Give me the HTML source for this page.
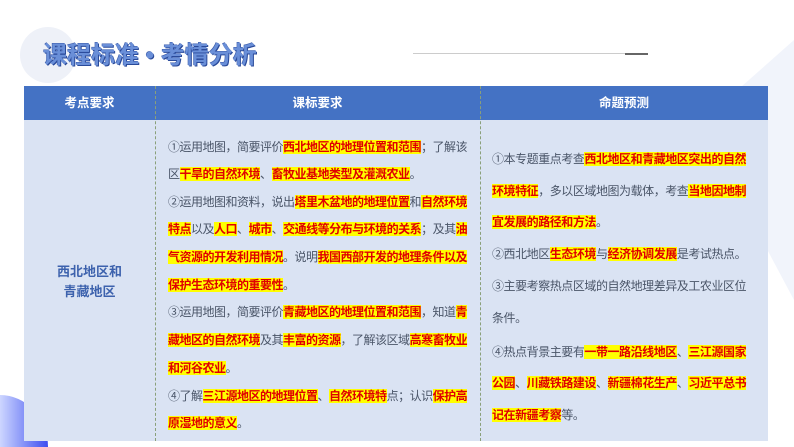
<!DOCTYPE html>
<html style="width:794px;height:447px;overflow:hidden"><head><meta charset="utf-8"><style>
*{margin:0;padding:0;box-sizing:border-box}
body{width:794px;height:447px;overflow:hidden;background:#fff;position:relative;font-family:"Liberation Sans","Noto Sans CJK SC",sans-serif}
.abs{position:absolute}
.t{position:absolute;white-space:nowrap;font-size:12px;color:#4a5568;line-height:16px;letter-spacing:-0.5px}
.r{letter-spacing:-0.45px}
.h{background:#ffff00;color:#e00000;font-weight:bold}
.hd{position:absolute;top:86px;height:34px;line-height:34px;color:#fff;font-weight:bold;font-size:12.5px;text-align:center}
</style></head><body>
<div class="abs" style="left:20px;top:27px;width:56px;height:56px;border-radius:50%;background:#eef1f8"></div>
<div class="abs" style="left:700px;top:40px;width:94px;height:260px;background:#f1f4fb;clip-path:polygon(100% 0,100% 100%,0 32%)"></div>
<div class="abs" style="left:0;top:395px;width:48px;height:52px;border-top-right-radius:48px 52px;background:linear-gradient(90deg,#cdd6ff,#3d4ef0)"></div>
<div class="abs" style="left:43px;top:41px;font-size:24px;font-weight:bold;color:#6a8fd8;text-shadow:1px 1px 0 #2a4a9a,-0.5px -0.5px 0 #3a5aa8;line-height:30px">课程标准 • 考情分析</div>
<div class="abs" style="left:413px;top:53px;width:212px;height:1px;background:#ccc"></div>
<div class="abs" style="left:625px;top:53px;width:23px;height:2px;background:#666"></div>
<div class="abs" style="left:24px;top:86px;width:744px;height:34px;background:#4472c4"></div>
<div class="abs" style="left:24px;top:120px;width:744px;height:321px;background:#dae3f3"></div>
<div class="abs" style="left:155px;top:86px;width:1px;height:355px;border-left:1px dashed #8aa07a"></div>
<div class="abs" style="left:480px;top:86px;width:1px;height:355px;border-left:1px dashed #8aa07a"></div>
<div class="hd" style="left:24px;width:131px">考点要求</div>
<div class="hd" style="left:155px;width:325px">课标要求</div>
<div class="hd" style="left:480px;width:288px">命题预测</div>
<div class="abs" style="left:24px;top:262px;width:131px;text-align:center;color:#3d62ad;font-size:13px;line-height:20px;font-weight:bold">西北地区和<br>青藏地区</div>

<div class="t" style="left:168px;top:139px">①运用地图，简要评价<span class="h">西北地区的地理位置和范围</span>；了解该</div>
<div class="t" style="left:168px;top:166px">区<span class="h">干旱的自然环境</span>、<span class="h">畜牧业基地类型及灌溉农业</span>。</div>
<div class="t" style="left:168px;top:194px">②运用地图和资料，说出<span class="h">塔里木盆地的地理位置</span>和<span class="h">自然环境</span></div>
<div class="t" style="left:168px;top:221px"><span class="h">特点</span>以及<span class="h">人口</span>、<span class="h">城市</span>、<span class="h">交通线等分布与环境的关系</span>；及其<span class="h">油</span></div>
<div class="t" style="left:168px;top:249px"><span class="h">气资源的开发利用情况</span>。说明<span class="h">我国西部开发的地理条件以及</span></div>
<div class="t" style="left:168px;top:277px"><span class="h">保护生态环境的重要性</span>。</div>
<div class="t" style="left:168px;top:304px">③运用地图，简要评价<span class="h">青藏地区的地理位置和范围</span>，知道<span class="h">青</span></div>
<div class="t" style="left:168px;top:332px"><span class="h">藏地区的自然环境</span>及其<span class="h">丰富的资源</span>，了解该区域<span class="h">高寒畜牧业</span></div>
<div class="t" style="left:168px;top:360px"><span class="h">和河谷农业</span>。</div>
<div class="t" style="left:168px;top:388px">④了解<span class="h">三江源地区的地理位置</span>、<span class="h">自然环境特</span>点；认识<span class="h">保护高</span></div>
<div class="t" style="left:168px;top:415px"><span class="h">原湿地的意义</span>。</div>

<div class="t r" style="left:492px;top:151px">①本专题重点考查<span class="h">西北地区和青藏地区突出的自然</span></div>
<div class="t r" style="left:492px;top:183px"><span class="h">环境特征</span>，多以区域地图为载体，考查<span class="h">当地因地制</span></div>
<div class="t r" style="left:492px;top:214px"><span class="h">宜发展的路径和方法</span>。</div>
<div class="t r" style="left:492px;top:246px">②西北地区<span class="h">生态环境</span>与<span class="h">经济协调发展</span>是考试热点。</div>
<div class="t r" style="left:492px;top:278px">③主要考察热点区域的自然地理差异及工农业区位</div>
<div class="t r" style="left:492px;top:310px">条件。</div>
<div class="t r" style="left:492px;top:344px">④热点背景主要有<span class="h">一带一路沿线地区</span>、<span class="h">三江源国家</span></div>
<div class="t r" style="left:492px;top:375px"><span class="h">公园</span>、<span class="h">川藏铁路建设</span>、<span class="h">新疆棉花生产</span>、<span class="h">习近平总书</span></div>
<div class="t r" style="left:492px;top:407px"><span class="h">记在新疆考察</span>等。</div>
</body></html>
